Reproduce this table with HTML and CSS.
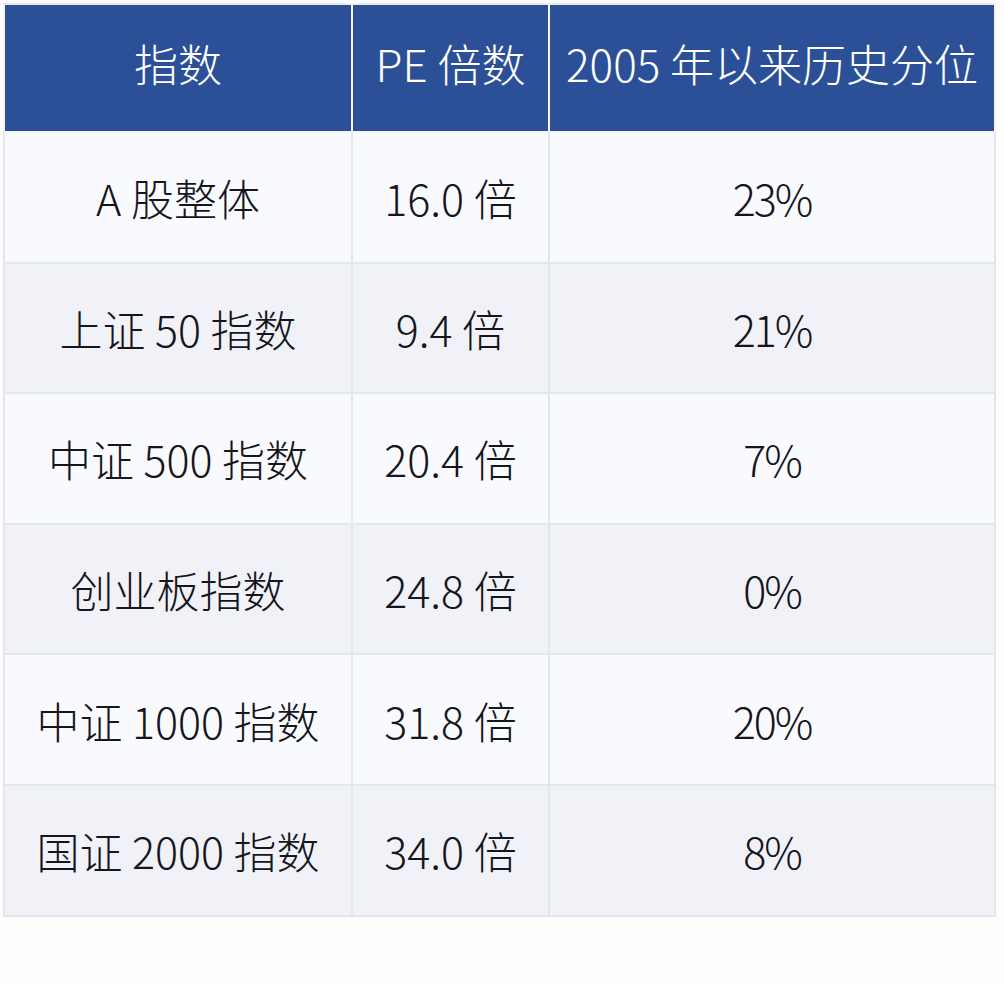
FILE: index.html
```html
<!DOCTYPE html>
<html lang="zh-CN">
<head>
<meta charset="utf-8">
<link rel="stylesheet" href="styles.css">
</head>
<body>
<table class="pe-table">
  <colgroup>
    <col class="c1"><col class="c2"><col class="c3">
  </colgroup>
  <thead>
    <tr><th>指数</th><th>PE 倍数</th><th>2005 年以来历史分位</th></tr>
  </thead>
  <tbody>
    <tr><td>A 股整体</td><td>16.0 倍</td><td class="pct">23%</td></tr>
    <tr><td>上证 50 指数</td><td>9.4 倍</td><td class="pct">21%</td></tr>
    <tr><td>中证 500 指数</td><td>20.4 倍</td><td class="pct">7%</td></tr>
    <tr><td>创业板指数</td><td>24.8 倍</td><td class="pct">0%</td></tr>
    <tr><td>中证 1000 指数</td><td>31.8 倍</td><td class="pct">20%</td></tr>
    <tr><td>国证 2000 指数</td><td>34.0 倍</td><td class="pct">8%</td></tr>
  </tbody>
</table>
</body>
</html>
```
FILE: styles.css
```css
html, body {
  margin: 0;
  padding: 0;
  background: #fdfdfe;
}
body {
  padding: 3px 0 0 3px;
  font-family: "Noto Sans CJK SC", "Noto Sans", sans-serif;
}
.pe-table {
  border-collapse: collapse;
  table-layout: fixed;
  width: 991px;
}
.c1 { width: 348px; }
.c2 { width: 197px; }
.c3 { width: 446px; }
.pe-table th {
  background: #2b5097;
  color: #ffffff;
  font-weight: 300;
  font-size: 44px;
  height: 128px;
  padding: 0 0 10px 0;
  box-sizing: border-box;
  text-align: center;
  border: 2px solid #f3f5f9;
  border-top-color: #e9ecf1;
}
.pe-table td {
  font-size: 43px;
  font-weight: 300;
  color: #15151c;
  height: 128.6px;
  padding: 0;
  text-align: center;
  border: 2px solid #e3e6ec;
}
.pe-table tbody tr:nth-child(odd) td { background: #f9fafd; }
.pe-table tbody tr:nth-child(even) td { background: #f0f2f7; }
.pct {
  letter-spacing: -2px;
}
```
